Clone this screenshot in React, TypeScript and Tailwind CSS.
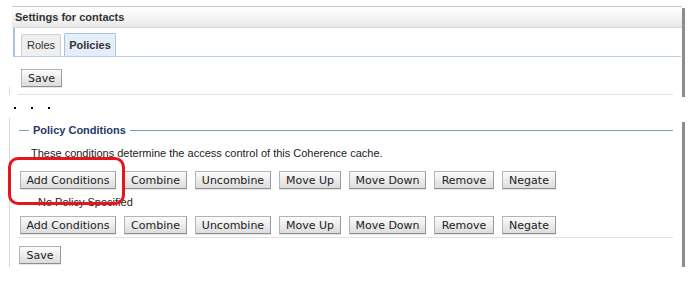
import React from "react";

// ─── Small pieces ─────────────────────────────────────────────────────────────

type BtnProps = { label: string; w: string };

function Btn({ label, w }: BtnProps) {
  return (
    <div
      className={`${w} h-[18px] shrink-0 flex items-center justify-center border border-[#b4b4b4] border-b-[#8e8e8e] border-r-[#9a9a9a] bg-gradient-to-b from-[#fcfcfc] to-[#dcdcdc] text-[11px] leading-none text-[#222] font-['DejaVu_Sans',sans-serif] shadow-[0_1px_0_#e6e6e6]`}
    >
      {label}
    </div>
  );
}

const ACTIONS: BtnProps[] = [
  { label: "Add Conditions", w: "w-[96px]" },
  { label: "Combine", w: "w-[63px]" },
  { label: "Uncombine", w: "w-[76px]" },
  { label: "Move Up", w: "w-[62px]" },
  { label: "Move Down", w: "w-[77px]" },
  { label: "Remove", w: "w-[60px]" },
  { label: "Negate", w: "w-[54px]" },
];

function ActionRow() {
  return (
    <div className="flex gap-2 pl-[10px]">
      {ACTIONS.map((a) => (
        <Btn key={a.label} {...a} />
      ))}
    </div>
  );
}

// Thick gray edge that closes each panel on the right
function EdgeBar({ h, top }: { h: string; top: string }) {
  return <div className={`w-[3px] shrink-0 ${h} ${top} bg-[#8c8c8c]`} />;
}

// ─── Page ─────────────────────────────────────────────────────────────────────

export default function App() {
  return (
    <div className="relative w-[694px] h-[287px] bg-white overflow-hidden pt-[6px] font-['Liberation_Sans',Arial,sans-serif] text-[#222]">
      {/* Settings panel */}
      <div className="flex items-start ml-[11px] w-[674px]">
        <div className="w-[671px] shrink-0">
          <div className="h-[22px] ml-[1px] border-t border-[#c8c8c8] border-b border-b-[#dadada] bg-gradient-to-b from-white to-[#e9e9e9] flex items-center pl-[3px] text-[11px] font-bold text-[#333]">
            Settings for contacts
          </div>

          {/* Tabs */}
          <div className="ml-[2px] mr-[1px] h-[29px] border-l-2 border-[#a9c3dc] border-b border-b-[#b9cfe4] flex items-end pl-[6px] gap-[3px]">
            <div className="w-[40px] h-[22px] border border-b-0 border-[#cfcfcf] rounded-t-[2px] bg-[#efefef] flex items-center justify-center text-[11px] text-[#333]">
              Roles
            </div>
            <div className="w-[52px] h-[23px] border border-b-0 border-[#a8c4de] rounded-t-[2px] bg-[#e3eef8] flex items-center justify-center text-[11px] font-bold text-[#333]">
              Policies
            </div>
          </div>

          {/* Save */}
          <div className="pt-[12px] pl-[10px]">
            <Btn label="Save" w="w-[41px]" />
          </div>
          <div className="flex mt-[7px]">
            <div className="w-[1px] h-[8px] -mt-[7px] bg-[#dcdcdc] -ml-[2px]" />
            <div className="ml-[8px] w-[655px] h-[1px] bg-[#e2e2e2]" />
          </div>
        </div>
        <EdgeBar h="h-[89px]" top="mt-[2px]" />
      </div>

      {/* Ellipsis dots */}
      <div className="flex mt-[10px] pl-[14px] gap-[14px]">
        <span className="w-[2px] h-[2px] bg-black" />
        <span className="w-[2px] h-[2px] bg-black ml-[1px]" />
        <span className="w-[2px] h-[2px] bg-black ml-[1px]" />
      </div>

      {/* Policy conditions panel */}
      <div className="flex items-start ml-[9px] mt-[9px] w-[676px]">
        <div className="w-[673px] shrink-0 border-l border-[#d6d6d6] pt-[6px] pb-[3px]">
          <div className="flex items-center h-[12px] pl-[9px] pr-[9px] gap-[4px]">
            <div className="w-[10px] h-[1px] bg-[#7d9dc4]" />
            <span className="text-[11px] font-bold text-[#1f3a6a] leading-none">Policy Conditions</span>
            <div className="flex-1 h-[1px] bg-[#7d9dc4]" />
          </div>

          <p className="mt-[11px] pl-[21px] text-[11px] leading-[13px] text-[#222]">
            These conditions determine the access control of this Coherence cache.
          </p>

          <div className="mt-[11px]">
            <ActionRow />
          </div>

          <p className="mt-[7px] pl-[28px] text-[11px] leading-[13px] text-[#222]">No Policy Specified</p>

          <div className="mt-[7px]">
            <ActionRow />
          </div>

          <div className="mt-[3px] ml-[8px] w-[655px] h-[1px] bg-[#e2e2e2]" />

          <div className="mt-[8px] pl-[9px]">
            <Btn label="Save" w="w-[42px]" />
          </div>
        </div>
        <EdgeBar h="h-[145px]" top="mt-[4px]" />
      </div>

      {/* Annotation highlight */}
      <div className="absolute left-[8px] top-[157px] w-[117px] h-[48px] border-[3px] border-[#e8141b] rounded-[10px]" />
    </div>
  );
}
